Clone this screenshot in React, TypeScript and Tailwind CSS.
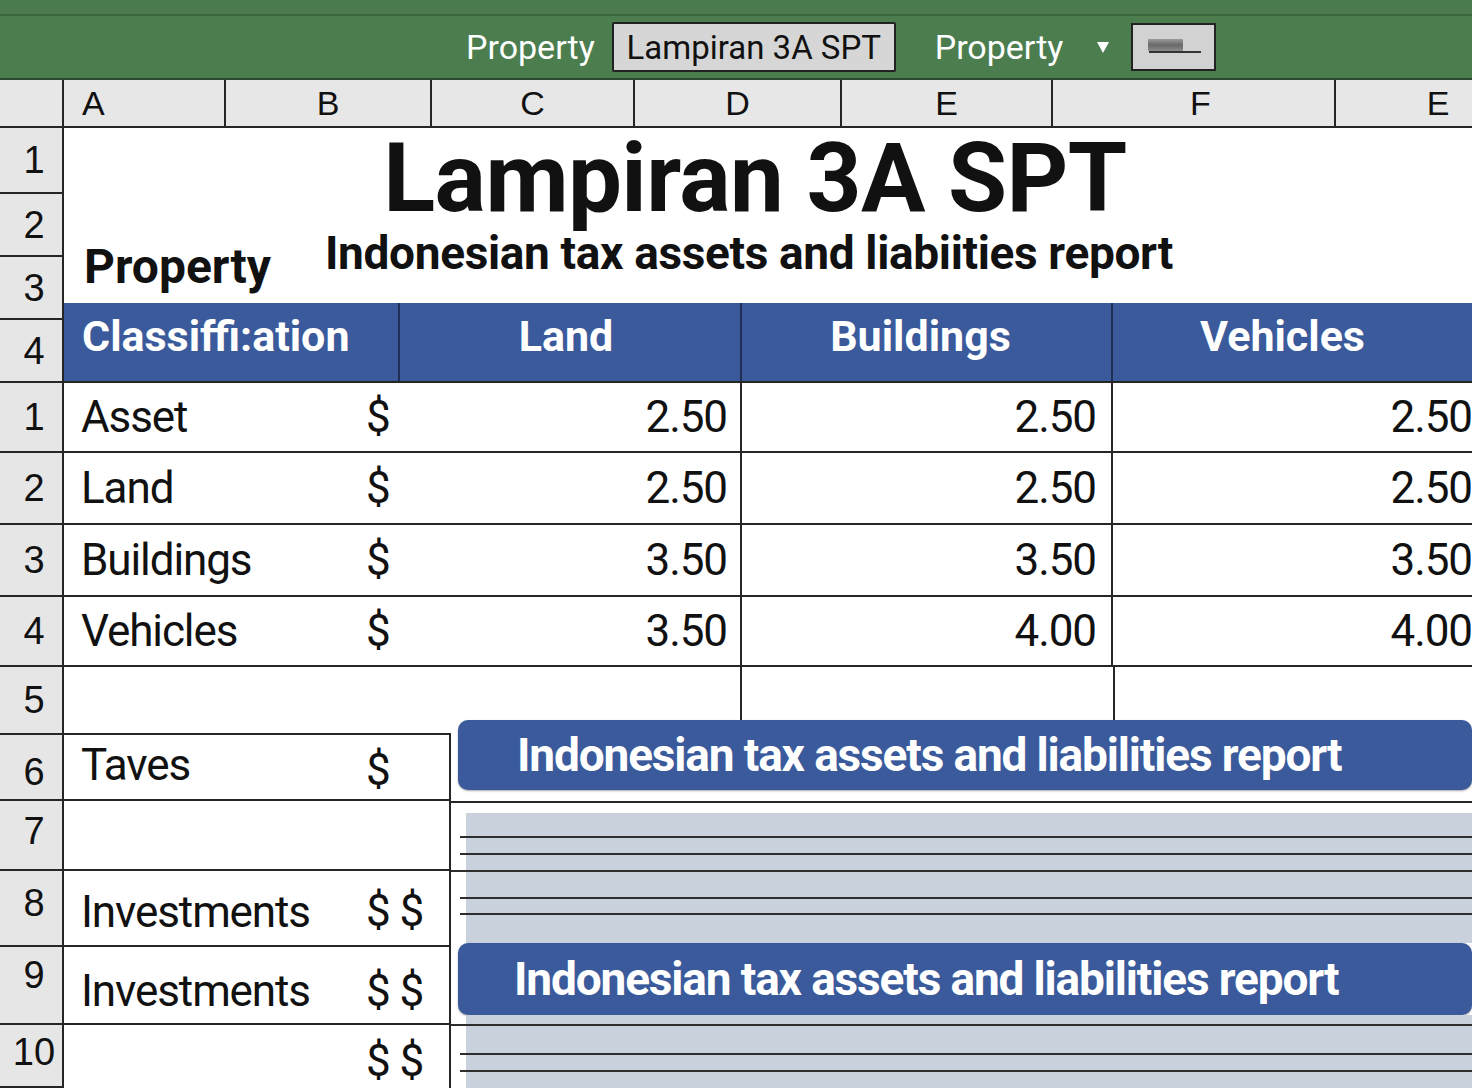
import React from "react";

const rows = [
  { n: "1", label: "Asset", a: "2.50", b: "2.50", c: "2.50", h: "h-[70px]" },
  { n: "2", label: "Land", a: "2.50", b: "2.50", c: "2.50", h: "h-[72px]" },
  { n: "3", label: "Buildings", a: "3.50", b: "3.50", c: "3.50", h: "h-[72px]" },
  { n: "4", label: "Vehicles", a: "3.50", b: "4.00", c: "4.00", h: "h-[70px]" },
];

function RowNum({ n, cls }: { n: string; cls: string }) {
  return (
    <div
      className={`${cls} shrink-0 bg-[#e6e6e6] border-b-2 border-[#262626] flex items-center justify-center pl-[6px] text-[38px] leading-none text-[#111] font-['Liberation_Sans',Arial,sans-serif]`}
    >
      {n}
    </div>
  );
}

function Banner({ pl }: { pl: string }) {
  return (
    <div
      className={`ml-[7px] h-full rounded-[10px] bg-[#3a5a9b] flex items-center ${pl} text-white font-bold text-[46px] leading-none tracking-tight shadow-[0_1px_2px_rgba(0,0,0,0.35)]`}
    >
      Indonesian tax assets and liabilities report
    </div>
  );
}

export default function App() {
  return (
    <div className="w-[1472px] h-[1088px] overflow-hidden bg-white font-['Roboto',Arial,sans-serif] text-[#111]">
      {/* Top green bar */}
      <div className="h-[80px] flex flex-col bg-[#4b7d4f] border-b-2 border-[#2c4a2f]">
        <div className="h-[16px] bg-[#4a7a4d] border-b-2 border-[#3a673e]" />
        <div className="flex-1 flex items-center pl-[466px]">
          <span className="text-white text-[34px] leading-none">Property</span>
          <div className="ml-[17px] h-[50px] w-[284px] bg-[#d6d6d6] border-2 border-[#222] rounded-[2px] flex items-center justify-center text-[33px] leading-none text-[#111]">
            Lampiran 3A SPT
          </div>
          <span className="ml-[39px] text-white text-[34px] leading-none">Property</span>
          <svg className="ml-[34px]" width="12" height="12" viewBox="0 0 12 12">
            <polygon points="0,1 12,1 6,12" fill="#ffffff" />
          </svg>
          <div className="ml-[22px] w-[85px] h-[48px] bg-[#d2d2d2] border-2 border-[#222] flex items-center justify-center">
            <svg width="60" height="20" viewBox="0 0 60 20">
              <defs>
                <linearGradient id="g1" x1="0" y1="0" x2="0" y2="1">
                  <stop offset="0" stopColor="#9a9a9a" />
                  <stop offset="0.5" stopColor="#6a6a6a" />
                  <stop offset="1" stopColor="#8a8a8a" />
                </linearGradient>
              </defs>
              <rect x="4" y="2" width="35" height="12" fill="url(#g1)" rx="1" />
              <rect x="5" y="14" width="52" height="2" fill="#333" />
            </svg>
          </div>
        </div>
      </div>

      {/* Column letters */}
      <div className="h-[48px] flex bg-[#e7e7e7] border-b-2 border-[#262626] text-[34px] leading-none font-['Liberation_Sans',Arial,sans-serif] text-[#111]">
        <div className="w-[64px] shrink-0 border-r-2 border-[#262626]" />
        <div className="w-[162px] shrink-0 border-r-2 border-[#262626] flex items-center pl-[18px]">A</div>
        <div className="w-[206px] shrink-0 border-r-2 border-[#262626] flex items-center justify-center">B</div>
        <div className="w-[203px] shrink-0 border-r-2 border-[#262626] flex items-center justify-center">C</div>
        <div className="w-[207px] shrink-0 border-r-2 border-[#262626] flex items-center justify-center">D</div>
        <div className="w-[211px] shrink-0 border-r-2 border-[#262626] flex items-center justify-center">E</div>
        <div className="w-[283px] shrink-0 border-r-2 border-[#262626] flex items-center justify-center pl-[14px]">F</div>
        <div className="w-[204px] shrink-0 flex items-center justify-center">E</div>
      </div>

      {/* Title block + blue header */}
      <div className="flex">
        <div className="w-[64px] shrink-0 flex flex-col border-r-2 border-[#262626]">
          <RowNum n="1" cls="h-[66px]" />
          <RowNum n="2" cls="h-[63px]" />
          <RowNum n="3" cls="h-[63px]" />
          <RowNum n="4" cls="h-[63px]" />
        </div>
        <div className="flex-1 flex flex-col">
          <div className="h-[175px] flex flex-col">
            <div className="mt-[7px] pr-[26px] text-center text-[96px] font-bold leading-[0.9] tracking-[-0.6px]">
              Lampiran 3A SPT
            </div>
            <div className="mt-[9px] flex items-start">
              <div className="w-[261px] shrink-0 pl-[20px] mt-[13px] text-[48px] font-bold leading-none">
                Property
              </div>
              <div className="text-[46px] font-bold leading-none tracking-[-0.35px]">
                Indonesian tax assets and liabiities report
              </div>
            </div>
          </div>
          <div className="h-[80px] flex bg-[#3a5a9b] border-b-2 border-[#262626] text-white text-[43px] font-bold leading-none">
            <div className="w-[336px] shrink-0 border-r-2 border-[#1f2f55] flex items-center pl-[18px] pb-[12px]">
              Classiffi:ation
            </div>
            <div className="w-[342px] shrink-0 border-r-2 border-[#1f2f55] flex items-center justify-center pb-[12px] pr-[8px]">
              Land
            </div>
            <div className="w-[371px] shrink-0 border-r-2 border-[#1f2f55] flex items-center justify-center pb-[12px] pr-[12px]">
              Buildings
            </div>
            <div className="flex-1 flex items-center justify-center pb-[12px] pr-[20px]">Vehicles</div>
          </div>
        </div>
      </div>

      {/* Data rows */}
      {rows.map((r) => (
        <div key={r.n} className={`${r.h} flex border-b-2 border-[#262626] text-[44px] leading-none tracking-tight`}>
          <div className="w-[64px] shrink-0 bg-[#e6e6e6] border-r-2 border-[#262626] flex items-center justify-center pl-[6px] text-[38px] tracking-normal font-['Liberation_Sans',Arial,sans-serif]">
            {r.n}
          </div>
          <div className="w-[678px] shrink-0 border-r-2 border-[#262626] flex items-center">
            <div className="w-[302px] shrink-0 pl-[17px]">{r.label}</div>
            <div>$</div>
            <div className="flex-1 text-right pr-[13px]">{r.a}</div>
          </div>
          <div className="w-[371px] shrink-0 border-r-2 border-[#262626] flex items-center justify-end pr-[15px]">
            {r.b}
          </div>
          <div className="w-[359px] shrink-0 flex items-center justify-end -mr-[14px]">{r.c}</div>
        </div>
      ))}

      {/* Lower section */}
      <div className="flex h-[421px]">
        <div className="w-[64px] shrink-0 flex flex-col border-r-2 border-[#262626]">
          <RowNum n="5" cls="h-[68px]" />
          <RowNum n="6" cls="h-[66px] pt-[10px]" />
          <RowNum n="7" cls="h-[70px] pb-[8px]" />
          <RowNum n="8" cls="h-[76px] pb-[10px]" />
          <RowNum n="9" cls="h-[78px] pb-[20px]" />
          <RowNum n="10" cls="flex-1 pb-[8px] pl-[2px]" />
        </div>

        <div className="w-[387px] shrink-0 flex flex-col text-[44px] leading-none tracking-tight">
          <div className="h-[68px] shrink-0 border-b-2 border-[#262626]" />
          <div className="h-[66px] shrink-0 border-b-2 border-r-2 border-[#262626] flex items-center">
            <div className="w-[302px] shrink-0 pl-[17px] pb-[4px]">Taves</div>
            <div className="pt-[6px]">$</div>
          </div>
          <div className="h-[70px] shrink-0 border-b-2 border-r-2 border-[#262626]" />
          <div className="h-[76px] shrink-0 border-b-2 border-r-2 border-[#262626] flex items-center">
            <div className="w-[302px] shrink-0 pl-[17px] pt-[8px]">Investments</div>
            <div className="pt-[6px]">$ $</div>
          </div>
          <div className="h-[78px] shrink-0 border-b-2 border-r-2 border-[#262626] flex items-center">
            <div className="w-[302px] shrink-0 pl-[17px] pt-[12px]">Investments</div>
            <div className="pt-[12px]">$ $</div>
          </div>
          <div className="flex-1 border-r-2 border-[#262626] flex items-start">
            <div className="w-[302px] shrink-0" />
            <div className="pt-[14px]">$ $</div>
          </div>
        </div>

        <div className="flex-1 flex flex-col">
          <div className="h-[53px] shrink-0 flex">
            <div className="w-[289px] shrink-0" />
            <div className="w-[373px] shrink-0 border-l-2 border-[#262626]" />
            <div className="flex-1 border-l-2 border-[#262626]" />
          </div>
          <div className="h-[70px] shrink-0">
            <Banner pl="pl-[59px]" />
          </div>
          <div className="h-[11px] shrink-0" />
          <div className="h-[2px] shrink-0 bg-[#262626]" />
          <div className="h-[10px] shrink-0" />
          <div className="h-[130px] shrink-0 ml-[15px] bg-[#c9d1dc] flex flex-col">
            <div className="h-[23px] shrink-0" />
            <div className="h-[2px] shrink-0 -ml-[6px] bg-[#2e2e2e]" />
            <div className="h-[15px] shrink-0" />
            <div className="h-[2px] shrink-0 -ml-[6px] bg-[#2e2e2e]" />
            <div className="h-[15px] shrink-0" />
            <div className="h-[2px] shrink-0 -ml-[15px] bg-[#2e2e2e]" />
            <div className="h-[25px] shrink-0" />
            <div className="h-[2px] shrink-0 -ml-[6px] bg-[#2e2e2e]" />
            <div className="h-[14px] shrink-0" />
            <div className="h-[2px] shrink-0 -ml-[6px] bg-[#2e2e2e]" />
          </div>
          <div className="h-[72px] shrink-0">
            <Banner pl="pl-[56px]" />
          </div>
          <div className="flex-1 ml-[15px] bg-[#c9d1dc] flex flex-col">
            <div className="h-[9px] shrink-0" />
            <div className="h-[2px] shrink-0 -ml-[15px] bg-[#2e2e2e]" />
            <div className="h-[27px] shrink-0" />
            <div className="h-[2px] shrink-0 -ml-[6px] bg-[#2e2e2e]" />
            <div className="h-[15px] shrink-0" />
            <div className="h-[2px] shrink-0 -ml-[6px] bg-[#2e2e2e]" />
          </div>
        </div>
      </div>
    </div>
  );
}
